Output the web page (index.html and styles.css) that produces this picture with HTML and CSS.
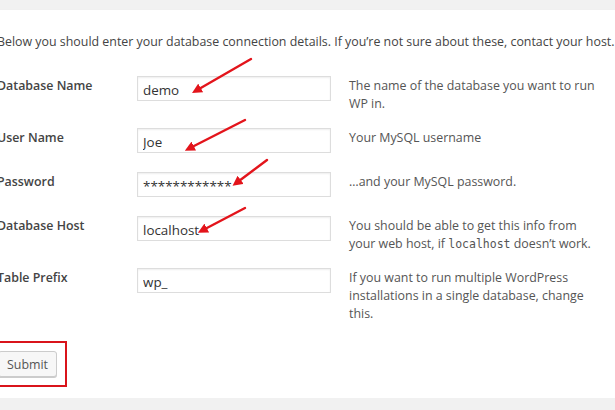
FILE: index.html
```html
<!DOCTYPE html>
<html>
<head>
<meta charset="utf-8">
<link rel="stylesheet" href="styles.css">
</head>
<body>
<div class="card">
  <div class="content">
    <p class="intro">Below you should enter your database connection details. If you’re not sure about these, contact your host.</p>
    <div class="rows">
      <div class="row">
        <div class="label">Database Name</div>
        <div class="field"><input class="input" type="text" value="demo"></div>
        <div class="desc">The name of the database you want to run WP in.</div>
      </div>
      <div class="row">
        <div class="label">User Name</div>
        <div class="field"><input class="input" type="text" value="Joe"></div>
        <div class="desc">Your MySQL username</div>
      </div>
      <div class="row">
        <div class="label">Password</div>
        <div class="field"><input class="input" type="text" value="************"></div>
        <div class="desc">…and your MySQL password.</div>
      </div>
      <div class="row">
        <div class="label">Database Host</div>
        <div class="field"><input class="input" type="text" value="localhost"></div>
        <div class="desc">You should be able to get this info from your web host, if <code>localhost</code> doesn’t work.</div>
      </div>
      <div class="row">
        <div class="label">Table Prefix</div>
        <div class="field"><input class="input" type="text" value="wp_"></div>
        <div class="desc">If you want to run multiple WordPress installations in a single database, change this.</div>
      </div>
    </div>
    <div class="submit-wrap">
      <button class="button" type="button">Submit</button>
    </div>
  </div>
  <svg class="arrows" width="615" height="410" viewBox="0 0 615 410">
    <defs>
      <marker id="head" viewBox="0 0 10 10" refX="2" refY="5" markerWidth="4.2" markerHeight="4.2" orient="auto-start-reverse">
        <path d="M0 0 L10 5 L0 10 z" fill="#e3141b"/>
      </marker>
    </defs>
    <g stroke="#e3141b" stroke-width="2.4" stroke-linecap="round" fill="none">
      <line x1="251" y1="59" x2="199" y2="89" marker-end="url(#head)"/>
      <line x1="245" y1="120" x2="192" y2="147" marker-end="url(#head)"/>
      <line x1="267" y1="160" x2="239" y2="181" marker-end="url(#head)"/>
      <line x1="245" y1="208" x2="205" y2="229" marker-end="url(#head)"/>
    </g>
  </svg>
</div>
</body>
</html>
```
FILE: styles.css
```css
html, body {
  margin: 0;
  padding: 0;
}
body {
  background: #f1f1f1;
  padding-top: 10px;
  font-family: "Open Sans", "Noto Sans", sans-serif;
  font-size: 12.4px;
  color: #444;
  overflow: hidden;
}
.card {
  position: relative;
  background: #fff;
  height: 388px;
  box-shadow: 0 1px 2px rgba(0,0,0,0.08);
}
.content {
  margin-left: -3px;
  padding-top: 23px;
}
.intro {
  margin: 0;
  line-height: 18px;
  white-space: nowrap;
}
.rows {
  margin-top: 25px;
  display: flex;
  flex-direction: column;
  gap: 15px;
}
.row {
  display: grid;
  grid-template-columns: 122px 194px 254px;
  column-gap: 18px;
  align-items: start;
}
.label {
  font-weight: 600;
  line-height: 18px;
  margin-top: 1px;
}
.field {
  padding-bottom: 4px;
}
.input {
  display: block;
  box-sizing: border-box;
  width: 194px;
  height: 25px;
  margin: 0;
  padding: 2px 5px 0;
  border: 1px solid #ddd;
  box-shadow: inset 0 1px 2px rgba(0,0,0,0.07);
  font-family: "Open Sans", "Noto Sans", sans-serif;
  font-size: 13.4px;
  color: #333;
  background: #fff;
}
.desc {
  line-height: 18px;
  color: #555;
  margin-top: 1px;
}
.desc code {
  font-family: "DejaVu Sans Mono", "Liberation Mono", monospace;
  font-size: 11.5px;
}
.submit-wrap {
  margin-top: 18px;
  margin-left: -6px;
  width: 76px;
  height: 46px;
  border: 2.5px solid #d9141b;
  box-sizing: border-box;
  display: flex;
  align-items: center;
  padding-left: 5px;
}
.button {
  box-sizing: border-box;
  height: 26px;
  padding: 0 8px;
  border: 1px solid #ccc;
  border-radius: 3px;
  background: #f7f7f7;
  box-shadow: 0 1px 0 #ccc;
  font-family: "Open Sans", "Noto Sans", sans-serif;
  font-size: 12.4px;
  color: #555;
}
.arrows {
  position: absolute;
  left: 0;
  top: -10px;
  pointer-events: none;
}
```
